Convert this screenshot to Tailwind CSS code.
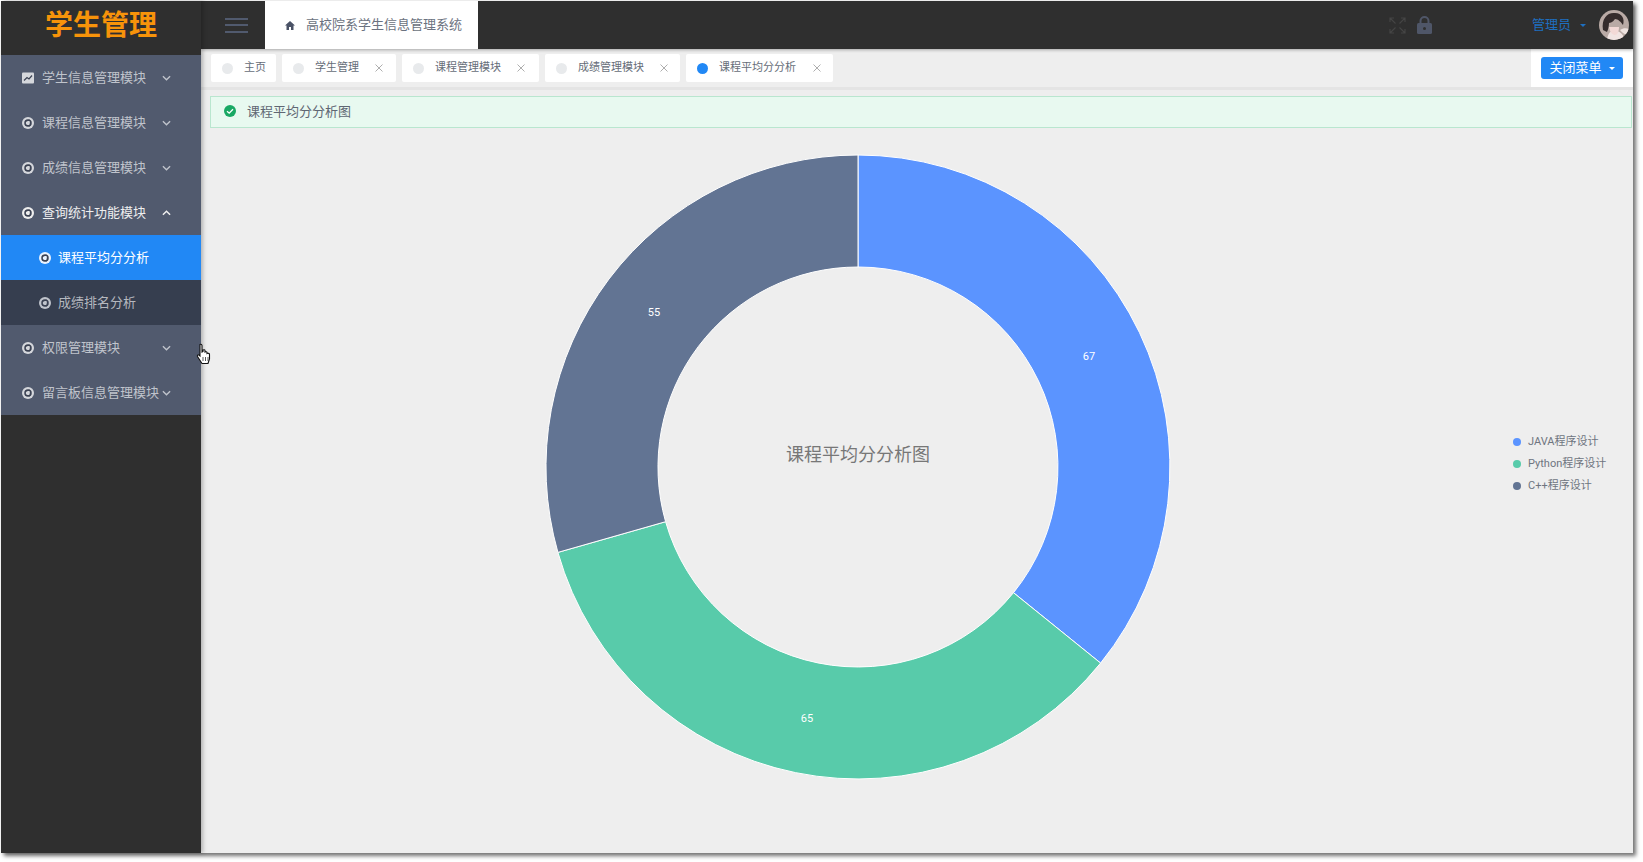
<!DOCTYPE html>
<html lang="zh-CN">
<head>
  <meta charset="UTF-8">
  <title>高校院系学生信息管理系统</title>
  <script src="https://cdn.jsdelivr.net/npm/@tailwindcss/browser@4"></script>
</head>
<body class="bg-white h-[862px] overflow-hidden font-['Roboto','Noto_Sans_CJK_SC',sans-serif]">
  <svg class="hidden">
    <symbol id="aperture" viewBox="0 0 12 12">
      <circle cx="6" cy="6" r="6" fill="currentColor"/>
      <circle cx="6" cy="6" r="3" fill="none" stroke="#3a4152" stroke-width="1.5"/>
      <path d="M3 4.5 7.5 3M8.5 4 8 8.5M8 9 3.5 8" stroke="#3a4152" stroke-width="1" fill="none"/>
    </symbol>
    <symbol id="chev-down" viewBox="0 0 10 6">
      <path d="M1 1l4 4 4-4" fill="none" stroke="currentColor" stroke-width="1.5"/>
    </symbol>
    <symbol id="chev-up" viewBox="0 0 10 6">
      <path d="M1 5l4-4 4 4" fill="none" stroke="currentColor" stroke-width="1.6"/>
    </symbol>
    <symbol id="close" viewBox="0 0 8 8">
      <path d="M.5.5l7 7M7.5.5l-7 7" stroke="currentColor" stroke-width=".8"/>
    </symbol>
  </svg>

  <!-- window -->
  <div class="relative ml-px mt-px flex h-[852px] w-[1632px] shadow-[3px_3px_4px_rgba(0,0,0,0.55)]">
    <!-- sidebar -->
    <aside class="flex w-[200px] flex-none flex-col bg-[#2f2f2f] z-10 shadow-[2px_0_4px_rgba(0,0,0,0.25)]">
      <div class="flex h-[54px] items-center justify-center pb-[4px] text-[28px] leading-none font-bold text-[#f7930a]">学生管理</div>
      <nav class="bg-[#515a6e] text-[13px]">
        <a class="flex h-[45px] items-center pl-[21px] text-[#c0c4cc]">
          <svg class="mr-[8px] h-[12px] w-[12px]" viewBox="0 0 12 12"><rect width="12" height="11" y=".5" rx="1" fill="#d5d7dc"/><path d="M2 8.5l3-3 2 1.5 3-3.5" fill="none" stroke="#3a4152" stroke-width="1.2"/></svg>
          <span class="w-[120px]">学生信息管理模块</span>
          <svg class="h-[6px] w-[9px] text-[#c0c4cc]"><use href="#chev-down"/></svg>
        </a>
        <a class="flex h-[45px] items-center pl-[21px] text-[#c0c4cc]">
          <svg class="mr-[8px] h-[12px] w-[12px] text-[#d5d7dc]"><use href="#aperture"/></svg>
          <span class="w-[120px]">课程信息管理模块</span>
          <svg class="h-[6px] w-[9px] text-[#c0c4cc]"><use href="#chev-down"/></svg>
        </a>
        <a class="flex h-[45px] items-center pl-[21px] text-[#c0c4cc]">
          <svg class="mr-[8px] h-[12px] w-[12px] text-[#d5d7dc]"><use href="#aperture"/></svg>
          <span class="w-[120px]">成绩信息管理模块</span>
          <svg class="h-[6px] w-[9px] text-[#c0c4cc]"><use href="#chev-down"/></svg>
        </a>
        <a class="flex h-[45px] items-center pl-[21px] text-[#eeeeee]">
          <svg class="mr-[8px] h-[12px] w-[12px] text-[#eeeeee]"><use href="#aperture"/></svg>
          <span class="w-[120px]">查询统计功能模块</span>
          <svg class="h-[6px] w-[9px] text-[#f0f0f0]"><use href="#chev-up"/></svg>
        </a>
        <a class="flex h-[45px] items-center bg-[#2188f5] pl-[38px] text-white">
          <svg class="mr-[7px] h-[12px] w-[12px] text-[#e8f2ff]"><use href="#aperture"/></svg>
          <span>课程平均分分析</span>
        </a>
        <a class="flex h-[45px] items-center bg-[#363e4f] pl-[38px] text-[#b5b8bf]">
          <svg class="mr-[7px] h-[12px] w-[12px] text-[#c0c4cc]"><use href="#aperture"/></svg>
          <span>成绩排名分析</span>
        </a>
        <a class="flex h-[45px] items-center pl-[21px] text-[#c0c4cc]">
          <svg class="mr-[8px] h-[12px] w-[12px] text-[#d5d7dc]"><use href="#aperture"/></svg>
          <span class="w-[120px]">权限管理模块</span>
          <svg class="h-[6px] w-[9px] text-[#c0c4cc]"><use href="#chev-down"/></svg>
        </a>
        <a class="flex h-[45px] items-center pl-[21px] text-[#c0c4cc]">
          <svg class="mr-[8px] h-[12px] w-[12px] text-[#d5d7dc]"><use href="#aperture"/></svg>
          <span class="w-[120px]">留言板信息管理模块</span>
          <svg class="h-[6px] w-[9px] text-[#c0c4cc]"><use href="#chev-down"/></svg>
        </a>
      </nav>
    </aside>

    <!-- hand cursor over the sidebar edge -->
    <svg class="absolute left-[195px] top-[342px] z-20 h-[22px] w-[17px]" viewBox="0 0 17 22">
      <path d="M4 1.5c1-.6 2 0 2 1V9l1-.5V7c1-.6 2-.3 2 .6V9c1-.6 2-.3 2 .6v.9c1-.5 2.500-.2 2.500.9v4.600l-1.500 4.500H6L1.500 13.500c-.5-1 .5-2 1.500-1.500l1 1V2.500z" fill="#fff" stroke="#111" stroke-width="1.100"/>
      <path d="M7 14v4M9.500 14v4M12 14v4" stroke="#111" stroke-width=".7"/>
    </svg>

    <!-- main column -->
    <main class="flex min-w-0 flex-1 flex-col bg-[#eeeeee]">
      <header class="flex h-[48px] flex-none items-center bg-[#2f2f2f] shadow-[0_1px_3px_rgba(0,0,0,0.3)] z-[5]">
        <div class="ml-[24px] flex h-[15px] w-[23px] flex-col justify-between">
          <i class="block h-[2px] bg-[#515a6e]"></i>
          <i class="block h-[2px] bg-[#515a6e]"></i>
          <i class="block h-[2px] bg-[#515a6e]"></i>
        </div>
        <div class="ml-[17px] flex h-full w-[213px] items-center bg-white pl-[20px] text-[13px] text-[#6b7280]">
          <svg class="mr-[11px] h-[11px] w-[10px]" viewBox="0 0 10 10"><path d="M5 .5 0 5h1.500v4.500h2.500V6.500h2v3h2.500V5H10z" fill="#4a5266"/></svg>
          高校院系学生信息管理系统
        </div>
        <div class="ml-auto flex items-center pr-[4px]">
          <svg class="h-[17px] w-[17px]" viewBox="0 0 17 17" fill="none" stroke="#454545" stroke-width="1.100"><path d="M1 5V1h4M12 1h4v4M16 12v4h-4M5 16H1v-4M1 1l5.500 5.500M16 1l-5.500 5.500M16 16l-5.500-5.500M1 16l5.500-5.500"/></svg>
          <svg class="ml-[11px] h-[18px] w-[15px]" viewBox="0 0 15 18"><path d="M3.500 8V5a4 4 0 0 1 8 0v3" fill="none" stroke="#4f5668" stroke-width="2"/><rect y="7" width="15" height="11" rx="1.500" fill="#4f5668"/><circle cx="7.500" cy="12.500" r="1.500" fill="#2f2f2f"/></svg>
          <span class="ml-[100px] text-[13px] text-[#1e6fc0]">管理员</span>
          <i class="ml-[9px] block h-0 w-0 border-x-[3px] border-t-[3px] border-x-transparent border-t-[#1e6fc0]"></i>
          <svg class="ml-[13px] h-[30px] w-[30px] rounded-full" viewBox="0 0 30 30">
            <rect width="30" height="30" fill="#b9aaa5"/>
            <path d="M8 30c1-7 4-10 8-9 5 0 8 3 10 9z" fill="#f1e4e2"/>
            <path d="M10 17c1 6 4 8 6 8s4-3 4-8z" fill="#f3d9d6"/>
            <path d="M4 20C2 8 9 2 16 3c7 0 10 6 8 12-2-3-5-6-8-6-2 3-5 4-6 4 0 3-1 7-2 9z" fill="#352c2c"/>
            <path d="M21 20c3-2 6-2 9-1v6c-3 0-7-2-9-5z" fill="#eee3e0"/>
          </svg>
        </div>
      </header>

      <!-- tab strip -->
      <div class="flex h-[41px] flex-none items-center border-b-[3px] border-[#e4e4e4] pl-[10px] text-[11px] text-[#666d78]">
        <div class="flex h-[28px] w-[65px] items-center rounded-[2px] bg-white pl-[11px]">
          <i class="mr-[11px] block h-[11px] w-[11px] rounded-full bg-[#e8eaec]"></i>主页
        </div>
        <div class="ml-[6px] flex h-[28px] w-[114px] items-center rounded-[2px] bg-white pl-[11px]">
          <i class="mr-[11px] block h-[11px] w-[11px] rounded-full bg-[#e8eaec]"></i>学生管理
          <svg class="ml-[16px] h-[8px] w-[8px] text-[#999]"><use href="#close"/></svg>
        </div>
        <div class="ml-[6px] flex h-[28px] w-[137px] items-center rounded-[2px] bg-white pl-[11px]">
          <i class="mr-[11px] block h-[11px] w-[11px] rounded-full bg-[#e8eaec]"></i>课程管理模块
          <svg class="ml-[16px] h-[8px] w-[8px] text-[#999]"><use href="#close"/></svg>
        </div>
        <div class="ml-[6px] flex h-[28px] w-[135px] items-center rounded-[2px] bg-white pl-[11px]">
          <i class="mr-[11px] block h-[11px] w-[11px] rounded-full bg-[#e8eaec]"></i>成绩管理模块
          <svg class="ml-[16px] h-[8px] w-[8px] text-[#999]"><use href="#close"/></svg>
        </div>
        <div class="ml-[6px] flex h-[28px] w-[147px] items-center rounded-[2px] bg-white pl-[11px]">
          <i class="mr-[11px] block h-[11px] w-[11px] rounded-full bg-[#2188f5]"></i>课程平均分分析
          <svg class="ml-[17px] h-[8px] w-[8px] text-[#999]"><use href="#close"/></svg>
        </div>
        <div class="ml-auto flex h-full w-[102px] items-center justify-center bg-white">
          <button class="flex h-[22px] w-[82px] items-center justify-center rounded-[3px] bg-[#2188f5] text-[13px] text-white">
            关闭菜单<i class="ml-[7px] block h-0 w-0 border-x-[3px] border-t-[3px] border-x-transparent border-t-white"></i>
          </button>
        </div>
      </div>

      <!-- alert -->
      <div class="ml-[9px] mr-[1px] mt-[6px] flex h-[32px] flex-none items-center border border-[#b9e6cf] bg-[#e8f9f0] pl-[13px] text-[13px] text-[#5f6773]">
        <svg class="mr-[11px] h-[12px] w-[12px] -translate-y-[1px]" viewBox="0 0 12 12"><circle cx="6" cy="6" r="6" fill="#19a864"/><path d="M3 6.200 5.200 8.200 9 4.200" fill="none" stroke="#fff" stroke-width="1.300"/></svg>
        课程平均分分析图
      </div>

      <!-- chart -->
      <div class="flex flex-1 items-start">
        <svg class="ml-[337px] mt-[19px] h-[640px] w-[640px] flex-none" viewBox="-320 -320 640 640">
          <path d="M0 -312A312 312 0 0 1 242.600 196.100L155.500 125.700A200 200 0 0 0 0 -200Z" fill="#5b94ff" stroke="#fff" stroke-width="1"/>
          <path d="M242.600 196.100A312 312 0 0 1 -300.100 85.400L-192.400 54.700A200 200 0 0 0 155.500 125.700Z" fill="#58cbaa" stroke="#fff" stroke-width="1"/>
          <path d="M-300.100 85.400A312 312 0 0 1 0 -312L0 -200A200 200 0 0 0 -192.400 54.700Z" fill="#627493" stroke="#fff" stroke-width="1"/>
          <g fill="#fff" font-size="11" text-anchor="middle">
            <text x="231" y="-107">67</text>
            <text x="-51" y="255">65</text>
            <text x="-204" y="-151">55</text>
          </g>
          <text x="0" y="-6" fill="#777" font-size="18" text-anchor="middle">课程平均分分析图</text>
        </svg>
        <ul class="ml-[335px] mt-[306px] space-y-[6px] text-[11px] leading-[16px] text-[#6f7580]">
          <li class="flex items-center"><i class="mr-[7px] block h-[8px] w-[8px] rounded-full bg-[#5b94ff]"></i>JAVA程序设计</li>
          <li class="flex items-center"><i class="mr-[7px] block h-[8px] w-[8px] rounded-full bg-[#58cbaa]"></i>Python程序设计</li>
          <li class="flex items-center"><i class="mr-[7px] block h-[8px] w-[8px] rounded-full bg-[#627493]"></i>C++程序设计</li>
        </ul>
      </div>
    </main>
  </div>
</body>
</html>
